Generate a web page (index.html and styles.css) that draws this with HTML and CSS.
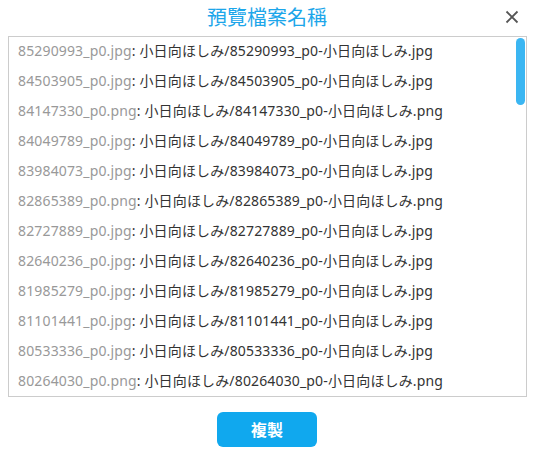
FILE: index.html
```html
<!DOCTYPE html>
<html lang="zh-Hant">
<head>
<meta charset="utf-8">
<title>預覽檔案名稱</title>
<link rel="stylesheet" href="styles.css">
</head>
<body>
<div class="dialog">
  <div class="header">
    <h1 class="title">預覽檔案名稱</h1>
    <button class="close" aria-label="close">
      <svg width="14" height="14" viewBox="0 0 14 14"><path d="M1.5 1.5 L12.5 12.5 M12.5 1.5 L1.5 12.5" stroke="#555" stroke-width="1.8" fill="none"/></svg>
    </button>
  </div>
  <div class="box">
    <div class="list">
      <div class="row"><span class="src">85290993_p0.jpg</span>: 小日向ほしみ/85290993_p0-小日向ほしみ.jpg</div>
      <div class="row"><span class="src">84503905_p0.jpg</span>: 小日向ほしみ/84503905_p0-小日向ほしみ.jpg</div>
      <div class="row"><span class="src">84147330_p0.png</span>: 小日向ほしみ/84147330_p0-小日向ほしみ.png</div>
      <div class="row"><span class="src">84049789_p0.jpg</span>: 小日向ほしみ/84049789_p0-小日向ほしみ.jpg</div>
      <div class="row"><span class="src">83984073_p0.jpg</span>: 小日向ほしみ/83984073_p0-小日向ほしみ.jpg</div>
      <div class="row"><span class="src">82865389_p0.png</span>: 小日向ほしみ/82865389_p0-小日向ほしみ.png</div>
      <div class="row"><span class="src">82727889_p0.jpg</span>: 小日向ほしみ/82727889_p0-小日向ほしみ.jpg</div>
      <div class="row"><span class="src">82640236_p0.jpg</span>: 小日向ほしみ/82640236_p0-小日向ほしみ.jpg</div>
      <div class="row"><span class="src">81985279_p0.jpg</span>: 小日向ほしみ/81985279_p0-小日向ほしみ.jpg</div>
      <div class="row"><span class="src">81101441_p0.jpg</span>: 小日向ほしみ/81101441_p0-小日向ほしみ.jpg</div>
      <div class="row"><span class="src">80533336_p0.jpg</span>: 小日向ほしみ/80533336_p0-小日向ほしみ.jpg</div>
      <div class="row"><span class="src">80264030_p0.png</span>: 小日向ほしみ/80264030_p0-小日向ほしみ.png</div>
    </div>
    <div class="scrollbar"></div>
  </div>
  <div class="footer">
    <button class="copy">複製</button>
  </div>
</div>
</body>
</html>
```
FILE: styles.css
```css
html, body {
  margin: 0;
  padding: 0;
  background: #fff;
}
body {
  font-family: "Noto Sans", "Noto Sans CJK JP", "Noto Sans CJK TC", sans-serif;
  color: #333;
}
.dialog {
  width: 534px;
  height: 453px;
  display: flex;
  flex-direction: column;
}
.header {
  position: relative;
  height: 36px;
  display: flex;
  align-items: center;
  justify-content: center;
}
.title {
  margin: 0;
  font-size: 20px;
  font-weight: normal;
  color: #1ca6ea;
  line-height: 28px;
  font-family: "Noto Sans CJK TC", sans-serif;
  margin-top: -3px;
}
.close {
  position: absolute;
  right: 15px;
  top: 10px;
  width: 14px;
  height: 14px;
  padding: 0;
  border: 0;
  background: none;
  display: block;
}
.close svg { display: block; }
.box {
  position: relative;
  margin: 0 7px 0 8px;
  height: 359px;
  border: 1px solid #ccc;
  overflow: hidden;
}
.list {
  padding-left: 9px;
  margin-top: -1px;
}
.row {
  height: 30px;
  line-height: 30px;
  font-size: 14px;
  letter-spacing: 0.15px;
  white-space: nowrap;
  color: #333;
}
.src {
  color: #999;
}
.scrollbar {
  position: absolute;
  right: 1px;
  top: 1px;
  width: 9px;
  height: 67px;
  border-radius: 5px;
  background: #3bb6f2;
}
.footer {
  display: flex;
  justify-content: center;
  padding-top: 15px;
}
.copy {
  width: 100px;
  height: 35px;
  border: 0;
  border-radius: 6px;
  background: #10a8ee;
  color: #fff;
  font-size: 16px;
  font-weight: bold;
  line-height: 35px;
  font-family: "Noto Sans CJK TC", sans-serif;
  padding: 0;
}
```
